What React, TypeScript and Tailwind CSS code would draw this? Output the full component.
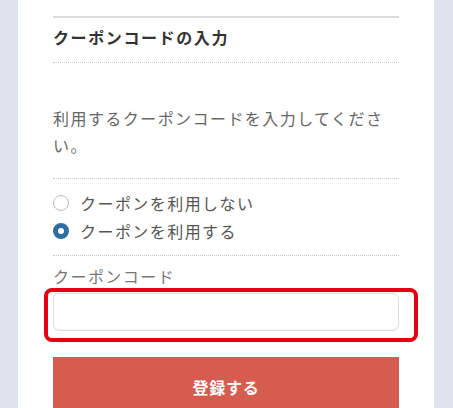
import React from 'react';

const jp = "font-['Noto_Sans_CJK_JP','Noto_Sans',sans-serif]";

const Radio: React.FC<{ checked?: boolean; label: string }> = ({ checked, label }) => (
  <label className="flex items-center gap-[11px] leading-[28px]">
    {checked ? (
      <span className="w-[16px] h-[16px] rounded-full border-[5px] border-[#2e6da4] bg-white shrink-0" />
    ) : (
      <span className="w-[16px] h-[16px] rounded-full border border-[#bdbdbd] bg-white shrink-0" />
    )}
    <span>{label}</span>
  </label>
);

const App: React.FC = () => {
  return (
    <div className={`h-[408px] overflow-hidden bg-[#dfe3ee] ${jp}`}>
      <div className="ml-[18px] w-[416px] min-h-[408px] bg-white px-[35px] pt-[16px]">
        <div className="border-t-2 border-[#dcdcdc]">
          {/* heading */}
          <h2 className="pt-[9px] pb-[14px] leading-[21px] text-[16px] font-bold tracking-[0.1em] text-[#333] border-b border-dotted border-[#c8c8c8]">
            クーポンコードの入力
          </h2>

          {/* description */}
          <p className="pt-[42px] pb-[19px] leading-[27px] text-[16px] tracking-[0.09em] text-[#666] border-b border-dotted border-[#c8c8c8]">
            利用するクーポンコードを入力してください。
          </p>

          {/* options */}
          <div className="pt-[10px] pb-[10px] text-[16px] tracking-[0.09em] text-[#555] border-b border-dotted border-[#c8c8c8]">
            <Radio label="クーポンを利用しない" />
            <Radio checked label="クーポンを利用する" />
          </div>

          {/* code input */}
          <div className="pt-[8px]">
            <div className="leading-[24px] text-[16px] tracking-[0.09em] text-[#777]">クーポンコード</div>
            <div className="relative mt-[5px]">
              <input
                type="text"
                className="block w-full h-[38px] rounded-[6px] border border-[#dedede] bg-white px-3 shadow-[inset_0_-1px_1px_rgba(0,0,0,0.06)] outline-none"
              />
              <div className="pointer-events-none absolute -top-[5px] -bottom-[11px] -left-[9px] -right-[19px] rounded-[8px] border-[4px] border-[#e60012]" />
            </div>
          </div>

          <button className="mt-[26px] block w-full h-[60px] bg-[#d45d50] text-white text-[16px] font-bold tracking-[0.05em]">
            登録する
          </button>
        </div>
      </div>
    </div>
  );
};

export default App;
